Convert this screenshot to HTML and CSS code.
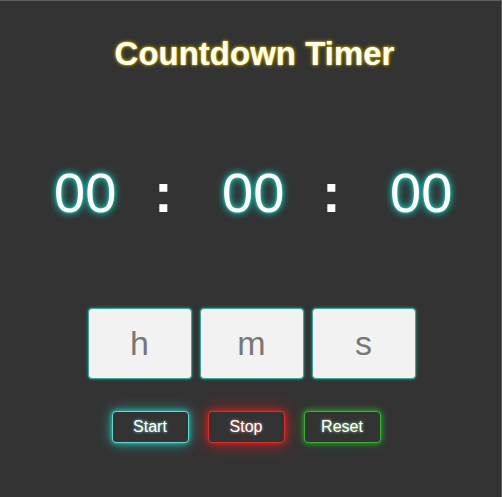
FILE: index.html
```html
<!DOCTYPE html>
<html lang="en">
<head>
<meta charset="utf-8">
<title>Countdown Timer</title>
<link rel="stylesheet" href="styles.css">
</head>
<body>
<main class="page">
  <h1 class="title">Countdown Timer</h1>
  <div class="clock">
    <span class="digits">00</span>
    <span class="colon">:</span>
    <span class="digits">00</span>
    <span class="colon">:</span>
    <span class="digits">00</span>
  </div>
  <div class="inputs">
    <input class="field" type="text" placeholder="h">
    <input class="field" type="text" placeholder="m">
    <input class="field" type="text" placeholder="s">
  </div>
  <div class="controls">
    <button class="btn btn-start">Start</button>
    <button class="btn btn-stop">Stop</button>
    <button class="btn btn-reset">Reset</button>
  </div>
</main>
</body>
</html>
```

FILE: styles.css
```css
* { box-sizing: border-box; }
html, body {
  margin: 0;
  padding: 0;
  background: #333333;
}
.page {
  min-height: 100vh;
  border-top: 1px solid #5e5e5e;
  border-right: 1px solid #5e5e5e;
  padding-top: 35px;
  font-family: "Liberation Sans", Arial, sans-serif;
  color: #fff;
  display: flex;
  flex-direction: column;
  align-items: center;
}
.title {
  margin: 0;
  font-size: 33px;
  line-height: 36px;
  font-weight: bold;
  color: #fffdf0;
  padding-left: 8px;
  text-shadow: 0 0 2px #f0d000, 0 0 4px #a89000;
}
.clock {
  margin-top: 89px;
  display: flex;
  align-items: baseline;
  padding-left: 5px;
  line-height: 64px;
}
.digits {
  display: block;
  width: 62px;
  font-size: 56px;
  color: #fff;
  text-shadow: 0 0 3px #2fd0c0, 0 0 7px #22b0a4, 0 0 10px #1a8a80;
}
.colon {
  display: block;
  width: 16px;
  text-align: center;
  font-size: 56px;
  font-weight: bold;
  color: #fff;
  margin: 0 52px 0 38px;
}
.inputs {
  margin-top: 83px;
  display: flex;
  gap: 8px;
  padding-left: 2px;
}
.field {
  width: 104px;
  height: 71px;
  padding: 0;
  margin: 0;
  border: 1px solid #3aa89c;
  border-radius: 4px;
  background: #f2f2f2;
  box-shadow: 0 0 3px #2a9a90;
  font-family: "Liberation Sans", Arial, sans-serif;
  font-size: 34px;
  text-align: center;
  color: #666;
  outline: none;
}
.field::placeholder {
  color: #777;
  opacity: 1;
}
.controls {
  margin-top: 32px;
  display: flex;
  gap: 19px;
  padding-right: 9px;
}
.btn {
  width: 77px;
  height: 32px;
  padding: 0;
  border-radius: 4px;
  background: #333333;
  color: #fff;
  font-family: "Liberation Sans", Arial, sans-serif;
  font-size: 16px;
  cursor: pointer;
}
.btn-start {
  border: 1px solid #60d8d0;
  box-shadow: 0 0 5px #2cc8bc, 0 0 14px rgba(40, 200, 190, 0.75);
  text-shadow: 0 0 3px #7ff0e8;
}
.btn-stop {
  border: 1px solid #d83030;
  box-shadow: 0 0 6px #e02020, 0 0 18px rgba(220, 30, 30, 0.75);
  text-shadow: 0 0 3px #ff9090;
}
.btn-reset {
  border: 1px solid #38b038;
  box-shadow: 0 0 5px #28a828, 0 0 10px rgba(40, 170, 40, 0.6);
  text-shadow: 0 0 3px #a0f0a0;
}
```
